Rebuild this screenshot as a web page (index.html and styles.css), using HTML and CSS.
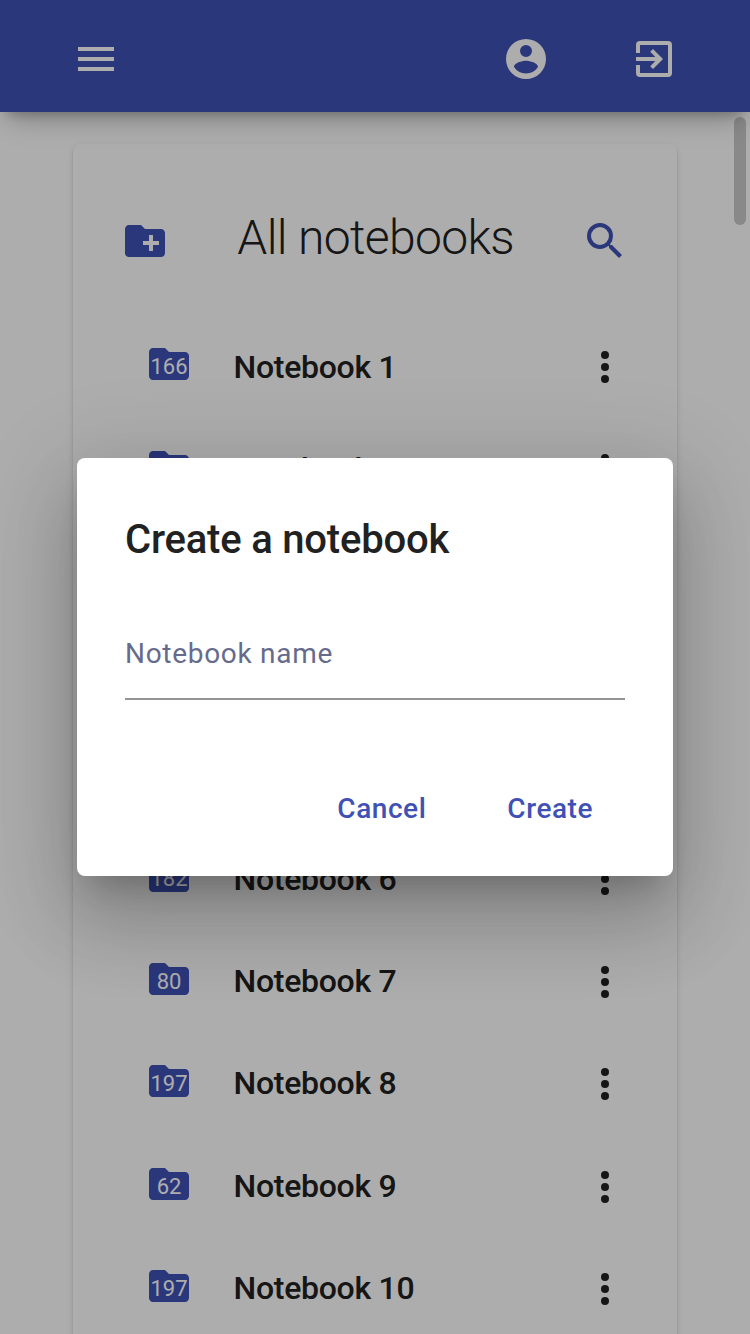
FILE: index.html
```html
<!DOCTYPE html>
<html lang="en">
<head>
<meta charset="utf-8">
<title>Notebooks</title>
<link rel="stylesheet" href="styles.css">
</head>
<body>
<svg class="sprite" aria-hidden="true">
  <symbol id="menu" viewBox="0 0 24 24"><path d="M3 18h18v-2H3v2zm0-5h18v-2H3v2zm0-7v2h18V6H3z"/></symbol>
  <symbol id="account" viewBox="0 0 24 24"><path fill-rule="evenodd" d="M12 2a10 10 0 1 0 0 20 10 10 0 0 0 0-20zm0 3a3 3 0 1 1 0 6 3 3 0 0 1 0-6zm0 14.2a7.2 7.2 0 0 1-6-3.22c.03-1.99 4-3.08 6-3.08 1.990 0 5.970 1.090 6 3.080a7.2 7.2 0 0 1-6 3.220z"/></symbol>
  <symbol id="exit" viewBox="0 0 24 24"><path d="M10.090 15.590 11.500 17l5-5-5-5-1.410 1.410L12.670 11H3v2h9.670l-2.580 2.590zM19 3H5a2 2 0 0 0-2 2v4h2V5h14v14H5v-4H3v4a2 2 0 0 0 2 2h14a2 2 0 0 0 2-2V5a2 2 0 0 0-2-2z"/></symbol>
  <symbol id="new-folder" viewBox="0 0 24 24"><path fill-rule="evenodd" d="M20 6h-8l-2-2H4c-1.110 0-1.990.890-1.990 2L2 18c0 1.110.890 2 2 2h16c1.110 0 2-.890 2-2V8c0-1.110-.890-2-2-2zm-1 8h-3v3h-2v-3h-3v-2h3V9h2v3h3v2z"/></symbol>
  <symbol id="folder" viewBox="0 0 24 24"><path d="M10 4H4c-1.100 0-1.990.900-1.990 2L2 18c0 1.100.900 2 2 2h16c1.100 0 2-.900 2-2V8c0-1.100-.900-2-2-2h-8l-2-2z"/></symbol>
  <symbol id="search" viewBox="0 0 24 24"><path fill-rule="evenodd" d="M15.500 14h-.790l-.280-.270A6.471 6.471 0 0 0 16 9.500 6.500 6.500 0 1 0 9.500 16c1.610 0 3.090-.590 4.230-1.570l.270.280v.790l5 4.990L20.490 19l-4.990-5zm-6 0a4.500 4.500 0 1 1 0-9 4.500 4.500 0 0 1 0 9z"/></symbol>
  <symbol id="more" viewBox="0 0 24 24"><circle cx="12" cy="6" r="2"/><circle cx="12" cy="12" r="2"/><circle cx="12" cy="18" r="2"/></symbol>
</svg>
<div class="app">
  <header class="topbar">
    <svg class="icon"><use href="#menu"/></svg>
    <div class="topbar-actions">
      <svg class="icon"><use href="#account"/></svg>
      <svg class="icon"><use href="#exit"/></svg>
    </div>
  </header>
  <div class="thumb"></div>
  <main class="card">
    <div class="card-head">
      <svg class="icon"><use href="#new-folder"/></svg>
      <h1 class="heading">All notebooks</h1>
      <svg class="icon"><use href="#search"/></svg>
    </div>
    <ul class="list">
      <li class="row"><span class="badge"><svg class="icon"><use href="#folder"/></svg><span class="count">166</span></span><span class="name">Notebook 1</span><svg class="icon more"><use href="#more"/></svg></li>
      <li class="row"><span class="badge"><svg class="icon"><use href="#folder"/></svg></span><span class="name">Notebook 2</span><svg class="icon more"><use href="#more"/></svg></li>
      <li class="row"></li>
      <li class="row"></li>
      <li class="row"></li>
      <li class="row"><span class="badge"><svg class="icon"><use href="#folder"/></svg><span class="count">182</span></span><span class="name">Notebook 6</span><svg class="icon more"><use href="#more"/></svg></li>
      <li class="row"><span class="badge"><svg class="icon"><use href="#folder"/></svg><span class="count">80</span></span><span class="name">Notebook 7</span><svg class="icon more"><use href="#more"/></svg></li>
      <li class="row"><span class="badge"><svg class="icon"><use href="#folder"/></svg><span class="count">197</span></span><span class="name">Notebook 8</span><svg class="icon more"><use href="#more"/></svg></li>
      <li class="row"><span class="badge"><svg class="icon"><use href="#folder"/></svg><span class="count">62</span></span><span class="name">Notebook 9</span><svg class="icon more"><use href="#more"/></svg></li>
      <li class="row"><span class="badge"><svg class="icon"><use href="#folder"/></svg><span class="count">197</span></span><span class="name">Notebook 10</span><svg class="icon more"><use href="#more"/></svg></li>
    </ul>
  </main>
</div>
<div class="scrim">
  <section class="dialog" role="dialog">
    <h2 class="dialog-title">Create a notebook</h2>
    <div class="field">Notebook name</div>
    <div class="actions">
      <button class="button">Cancel</button>
      <button class="button">Create</button>
    </div>
  </section>
</div>
</body>
</html>
```
FILE: styles.css
```css
* { box-sizing: border-box; }
html, body { margin: 0; height: 100%; overflow: hidden; }
body { font-family: Roboto, sans-serif; background: #fff; color: #212121; }
.sprite { position: absolute; width: 0; height: 0; }
.icon { display: block; width: 48px; height: 48px; fill: currentColor; flex: none; }

.app { height: 1334px; overflow: hidden; position: relative; z-index: 0; }
.topbar {
  position: relative; z-index: 1;
  height: 112px; padding: 6px 71.6px 0 72px;
  display: flex; align-items: center; justify-content: space-between;
  background: #3f51b5; color: #fff;
  box-shadow: 0 10px 10px -8px rgba(0,0,0,.2), 0 14px 26px -8px rgba(0,0,0,.28);
}
.topbar-actions { display: flex; gap: 80px; margin-right: .4px; }
.thumb {
  position: absolute; top: 117px; right: 4px;
  width: 12px; height: 108px; border-radius: 6px; background: #cacaca;
}

.card {
  margin: 32px 73px 0; height: 1400px; padding: 73px 48px 0;
  border-radius: 8px; background: #fff;
  box-shadow: 0 4px 2px -2px rgba(0,0,0,.2), 0 2px 2px 0 rgba(0,0,0,.14), 0 2px 6px 0 rgba(0,0,0,.12);
}
.card-head { display: flex; align-items: center; justify-content: space-between; height: 48px; padding-left: .4px; color: #3f51b5; }
.heading { margin: -7px 0 0 1px; font-size: 48px; line-height: 56px; font-weight: 300; letter-spacing: -.65px; color: #212121; }
.list { list-style: none; margin: 51px 0 0; padding: 0 0 0 24.3px; }
.row { height: 102.4px; display: flex; align-items: center; }
.badge { display: grid; margin-bottom: 5.6px; color: #3f51b5; }
.badge > * { grid-area: 1 / 1; }
.count { align-self: center; justify-self: center; margin-top: 6.2px; margin-right: .6px; font-size: 22px; line-height: 26px; color: #fff; }
.name { margin: 0 0 1.2px 40.2px; flex: 1; font-size: 32px; line-height: 48px; font-weight: 500; letter-spacing: -.28px; }
.more { margin-top: .4px; color: #212121; }

.scrim { position: absolute; inset: 0; display: grid; place-items: center; background: rgba(0,0,0,.32); }
.dialog {
  width: 596px; height: 418px; padding: 0 48px;
  border-radius: 8px; background: #fff;
  box-shadow: 0 22px 30px -14px rgba(0,0,0,.2), 0 48px 76px 6px rgba(0,0,0,.14), 0 18px 92px 16px rgba(0,0,0,.12);
}
.dialog-title { margin: 0; padding-top: 50px; font-size: 40px; line-height: 64px; font-weight: 500; letter-spacing: -.2px; }
.field {
  height: 112px; margin-top: 16px; padding-top: 45px;
  font-size: 28px; line-height: 42px; letter-spacing: .7px;
  color: #666b8c; border-bottom: 2px solid #949494;
}
.actions { display: flex; justify-content: flex-end; gap: 17px; margin-top: 73px; }
.button {
  height: 72px; padding: 0 32px; border: 0; background: none;
  font: 500 28px/72px Roboto, sans-serif; letter-spacing: .55px; color: #3f51b5;
}
```
